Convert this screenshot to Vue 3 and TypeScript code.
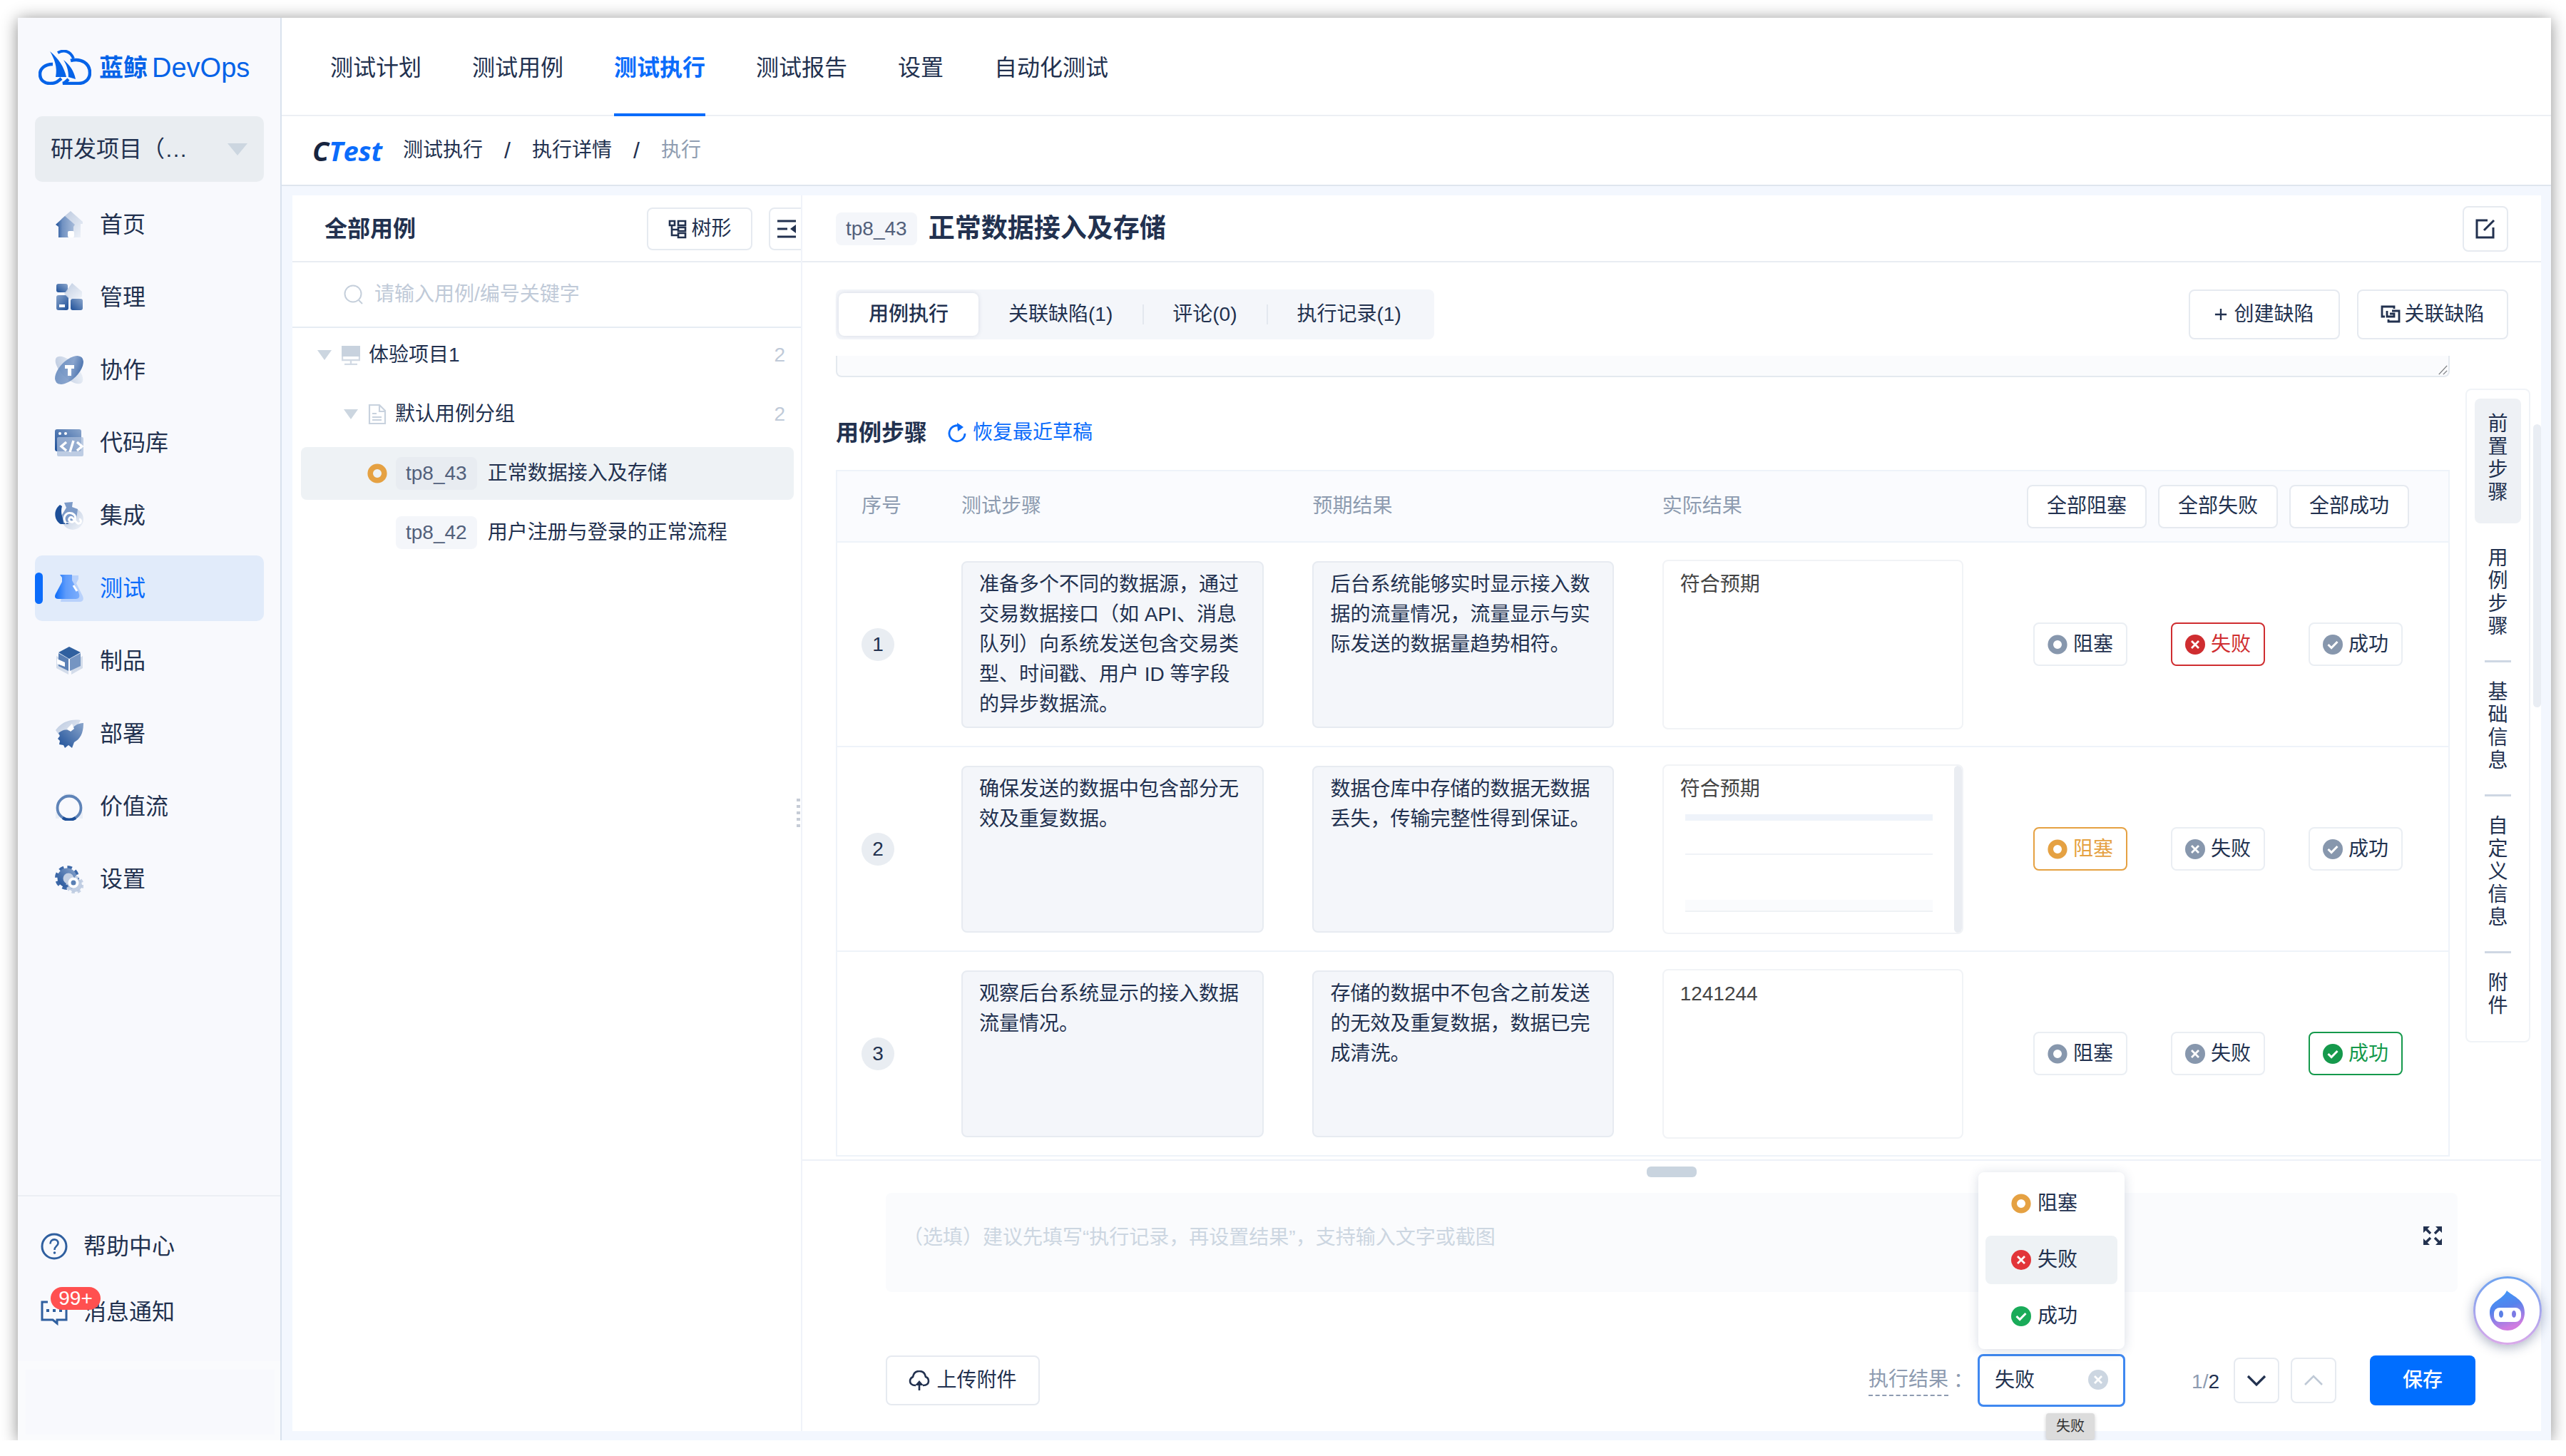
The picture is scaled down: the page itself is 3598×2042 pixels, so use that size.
<script setup lang="ts">
import { ref } from 'vue'

type Status = 'block' | 'fail' | 'pass'

interface Step {
  id: number
  action: string
  expected: string
  actual: string
  hasSketch: boolean
  status: Status
}

const statuses: { key: Status; label: string; icon: string }[] = [
  { key: 'block', label: '阻塞', icon: '#i-block' },
  { key: 'fail', label: '失败', icon: '#i-fail' },
  { key: 'pass', label: '成功', icon: '#i-pass' },
]

const topTabs = ['测试计划', '测试用例', '测试执行', '测试报告', '设置', '自动化测试']
const activeTop = ref('测试执行')

const menu = [
  { label: '首页', icon: '#m-home' },
  { label: '管理', icon: '#m-manage' },
  { label: '协作', icon: '#m-collab' },
  { label: '代码库', icon: '#m-code' },
  { label: '集成', icon: '#m-ci' },
  { label: '测试', icon: '#m-test' },
  { label: '制品', icon: '#m-artifact' },
  { label: '部署', icon: '#m-deploy' },
  { label: '价值流', icon: '#m-value' },
  { label: '设置', icon: '#m-setting' },
]
const activeMenu = ref('测试')

const caseTabs = ['用例执行', '关联缺陷(1)', '评论(0)', '执行记录(1)']
const activeCaseTab = ref('用例执行')

const steps = ref<Step[]>([
  {
    id: 1,
    action: '准备多个不同的数据源，通过交易数据接口（如 API、消息队列）向系统发送包含交易类型、时间戳、用户 ID 等字段的异步数据流。',
    expected: '后台系统能够实时显示接入数据的流量情况，流量显示与实际发送的数据量趋势相符。',
    actual: '符合预期',
    hasSketch: false,
    status: 'fail',
  },
  {
    id: 2,
    action: '确保发送的数据中包含部分无效及重复数据。',
    expected: '数据仓库中存储的数据无数据丢失，传输完整性得到保证。',
    actual: '符合预期',
    hasSketch: true,
    status: 'block',
  },
  {
    id: 3,
    action: '观察后台系统显示的接入数据流量情况。',
    expected: '存储的数据中不包含之前发送的无效及重复数据，数据已完成清洗。',
    actual: '1241244',
    hasSketch: false,
    status: 'pass',
  },
])

const anchors = ['前置步骤', '用例步骤', '基础信息', '自定义信息', '附件']
const activeAnchor = ref('前置步骤')

const keyword = ref('')
const project = ref('研发项目')
const record = ref('')
const precondition = ref('')
const result = ref<Status>('fail')

function markAll(status: Status) {
  steps.value.forEach((s) => (s.status = status))
}
</script>

<template>
  <svg class="sprite" aria-hidden="true">
    <defs>
      <linearGradient id="g-deep" x1="0" y1="1" x2="1" y2="0">
        <stop offset="0" stop-color="#1d4f98" />
        <stop offset="1" stop-color="#8ba6cc" />
      </linearGradient>
      <linearGradient id="g-down" x1="0" y1="0" x2="1" y2="1">
        <stop offset="0" stop-color="#86a2ca" />
        <stop offset="1" stop-color="#1d4f98" />
      </linearGradient>
      <linearGradient id="g-tilt" x1="0" y1="1" x2="1" y2="0">
        <stop offset="0" stop-color="#5f86bb" />
        <stop offset="0.55" stop-color="#7d9bc8" />
        <stop offset="1" stop-color="#1d4f98" />
      </linearGradient>
      <linearGradient id="g-front" x1="0" y1="0" x2="1" y2="0">
        <stop offset="0" stop-color="#1d4f98" />
        <stop offset="0.35" stop-color="#7091c1" />
        <stop offset="1" stop-color="#a9bddb" />
      </linearGradient>
      <linearGradient id="g-pale" x1="0" y1="0" x2="1" y2="1">
        <stop offset="0" stop-color="#b9c7de" />
        <stop offset="1" stop-color="#eff3f9" />
      </linearGradient>
      <linearGradient id="g-blue" x1="0" y1="0" x2="1" y2="0">
        <stop offset="0" stop-color="#0c6cf8" />
        <stop offset="0.45" stop-color="#5e9bfb" />
        <stop offset="1" stop-color="#7badfc" />
      </linearGradient>
      <linearGradient id="g-bot" x1="0" y1="0" x2="0.3" y2="1">
        <stop offset="0" stop-color="#3b9dfb" />
        <stop offset="0.5" stop-color="#5583ec" />
        <stop offset="1" stop-color="#cf7be0" />
      </linearGradient>
      <linearGradient id="g-ring" x1="0" y1="0" x2="0" y2="1">
        <stop offset="0" stop-color="#6ea3f0" />
        <stop offset="1" stop-color="#d9a9ea" />
      </linearGradient>
    </defs>

    <symbol id="i-block" viewBox="0 0 28 28">
      <circle cx="14" cy="14" r="9.8" fill="none" stroke="currentColor" stroke-width="7.6" />
    </symbol>
    <symbol id="i-fail" viewBox="0 0 28 28">
      <circle cx="14" cy="14" r="14" fill="currentColor" />
      <path d="M9 9l10 10M19 9L9 19" stroke="#fff" stroke-width="2.8" fill="none" />
    </symbol>
    <symbol id="i-pass" viewBox="0 0 28 28">
      <circle cx="14" cy="14" r="14" fill="currentColor" />
      <path d="M7.5 14l4.6 4.6L20.5 10" stroke="#fff" stroke-width="3" fill="none" />
    </symbol>

    <symbol id="m-home" viewBox="0 0 40 40">
      <path d="M9 12L22 1l17 15v3h-3v19H19z" fill="url(#g-pale)" />
      <path d="M1 20L14 8l14 12-2 3v7h-7v8H5V23z" fill="url(#g-front)" />
      <rect x="18" y="29" width="9" height="9" rx="2" fill="#fff" />
    </symbol>
    <symbol id="m-manage" viewBox="0 0 40 40">
      <rect x="2" y="1" width="16" height="12" rx="3" fill="url(#g-deep)" />
      <rect x="2" y="17" width="17" height="21" rx="3" fill="url(#g-down)" />
      <rect x="22" y="22" width="17" height="16" rx="3" fill="url(#g-deep)" />
      <path d="M24 0l14 12v7l-4 3H20l-7-7z" fill="url(#g-pale)" opacity="0.9" />
      <rect x="6" y="30" width="8" height="4" fill="#fff" />
    </symbol>
    <symbol id="m-collab" viewBox="0 0 40 40">
      <ellipse cx="20" cy="20" rx="11" ry="25" transform="rotate(-45 20 20)" fill="url(#g-pale)" />
      <ellipse cx="20" cy="20" rx="13" ry="25" transform="rotate(45 20 20)" fill="url(#g-tilt)" opacity="0.9" />
      <rect x="14" y="13" width="13" height="5" fill="#fff" />
      <rect x="18" y="13" width="5" height="15" fill="#fff" />
    </symbol>
    <symbol id="m-code" viewBox="0 0 40 40">
      <rect x="0" y="1" width="37" height="31" rx="3" fill="url(#g-deep)" />
      <rect x="3" y="12" width="37" height="27" rx="2" fill="#a9bcd9" opacity="0.75" />
      <circle cx="7" cy="7" r="2" fill="#fff" />
      <circle cx="15" cy="7" r="2" fill="#fff" />
      <path d="M16 19l-7 6 7 6M31 19l7 6-7 6M26 17l-5 16" fill="none" stroke="#fff" stroke-width="3.4" />
    </symbol>
    <symbol id="m-ci" viewBox="0 0 40 40">
      <circle cx="25" cy="25" r="15" fill="url(#g-pale)" />
      <path d="M7 5C-3 13-1 27 8 32l12 0C11 28 7 17 10 7z" fill="#1d4f98" />
      <path d="M13 2l12-1-1 7 8 3-2 14-18 6-2-12 6-10z" fill="#7d9bc8" />
      <path d="M16 31c-7-8 0-17 8-14 7 3 5 10 1 12-4 1-7-3-4-6 4-3 7 6 11 8 5 1 6-5 2-6" fill="none" stroke="#fff" stroke-width="3" />
    </symbol>
    <symbol id="m-test" viewBox="0 0 40 40">
      <path d="M15 2h18v5l-3 6 9 18c2 5 0 8-4 8H8z" fill="#b8d1fb" />
      <path d="M7 1h17v8l8 14c4 8 3 12-4 12H5c-6 0-6-4-3-9L10 11V5z" fill="url(#g-blue)" />
      <path d="M26 16l5 8" stroke="#fff" stroke-width="3" fill="none" />
    </symbol>
    <symbol id="m-artifact" viewBox="0 0 40 40">
      <path d="M2 13l17 9v17L2 30zM39 13L23 22v17l16-9z" fill="#d3dcea" />
      <path d="M20 0l16 8-16 9L5 8z" fill="#30609f" />
      <path d="M5 9l14 8v17L5 27z" fill="#5a80b5" />
      <path d="M36 9l-15 8v17l15-7z" fill="#7595c2" />
      <path d="M3 17l11 5v6L3 24z" fill="#fff" />
    </symbol>
    <symbol id="m-deploy" viewBox="0 0 40 40">
      <path d="M1 15C9 4 21-1 36 1L25 21 9 27z" fill="url(#g-pale)" />
      <path d="M40 5c0 14-4 22-13 27l-3 8-5-4-5 4-2-4-6-1 1-5-3-3 3-4-2-4c5-4 11-6 15-3l8-7c4-3 8-4 12-4z" fill="url(#g-deep)" />
      <path d="M24 6l3 7-5 4-5-4z" fill="#fff" />
    </symbol>
    <symbol id="m-value" viewBox="0 0 40 40">
      <path d="M13 2h14v4H13zM1 28h5v9H1zM34 28h5v9h-5z" fill="#e9eef6" />
      <circle cx="20" cy="22" r="16.5" fill="none" stroke="#5f84b8" stroke-width="3.8" />
      <path d="M11 36a16.500 16.500 0 0 0 18 0" fill="none" stroke="#1d4f98" stroke-width="4.400" />
    </symbol>
    <symbol id="m-setting" viewBox="0 0 40 40">
      <circle cx="17" cy="18" r="14.500" fill="none" stroke="#3c68a8" stroke-width="5" stroke-dasharray="6.400 4.988" />
      <circle cx="17" cy="18" r="13.500" fill="url(#g-deep)" />
      <circle cx="19" cy="19" r="7.500" fill="#c3d0e4" />
      <circle cx="28" cy="28" r="10.500" fill="none" stroke="#c6d2e5" stroke-width="4" stroke-dasharray="4.400 3.847" />
      <circle cx="28" cy="28" r="10" fill="#b9c8df" opacity="0.85" />
      <circle cx="26" cy="25" r="5.500" fill="#5a80b5" stroke="#fff" stroke-width="4" />
    </symbol>
  </svg>

  <div class="window">
    <aside class="sidebar">
      <a class="logo" href="#">
        <svg class="logo-mark" viewBox="0 0 74 49" aria-hidden="true">
          <path d="M20 20C8 20 2 27 2 34c0 9 7 13 14 13 8 0 10-2 16-7" fill="none" stroke="#0563e8" stroke-width="4.500" />
          <path d="M27 4c9-5 18-2 22 8" fill="none" stroke="#0563e8" stroke-width="4" />
          <path d="M45 15c15-4 27 4 27 17 0 10-8 15-16 15H34c4-1 5-3 8-6" fill="none" stroke="#0563e8" stroke-width="4.500" />
          <path d="M16 2c12 10 20 22 23 36H24C27 24 22 12 16 2z" fill="#0563e8" />
          <path d="M35 14c9 7 15 16 17 27l-10-3c0-9-2-16-7-24z" fill="#0563e8" />
        </svg>
        <span class="logo-cn">蓝鲸</span><span class="logo-en">DevOps</span>
      </a>

      <button class="project" type="button" :aria-label="project">
        <span>研发项目（…</span>
        <i class="caret"></i>
      </button>

      <nav class="menu">
        <a v-for="m in menu" :key="m.label" href="#" class="menu-item" :class="{ active: activeMenu === m.label }" @click.prevent="activeMenu = m.label">
          <svg class="menu-icon" aria-hidden="true"><use :href="m.icon" /></svg>
          <span>{{ m.label }}</span>
        </a>
      </nav>

      <div class="assist">
        <a href="#" class="assist-item">
          <svg viewBox="0 0 38 38" class="assist-icon" aria-hidden="true">
            <circle cx="19" cy="19" r="17" fill="none" stroke="#2f5f9f" stroke-width="3" />
            <path d="M13.500 15.500c0-8 11-8 11-1 0 4-5 4-5 9.500" fill="none" stroke="#2f5f9f" stroke-width="2.600" />
            <circle cx="19.500" cy="28" r="1.800" fill="#2f5f9f" />
          </svg>
          <span>帮助中心</span>
        </a>
        <a href="#" class="assist-item">
          <svg viewBox="0 0 38 38" class="assist-icon" aria-hidden="true">
            <path d="M10 5H2v25h15l6 5v-5h13V5h-8" fill="none" stroke="#2f5f9f" stroke-width="3" />
            <path d="M8 17h4M17 17h4M26 17h4" stroke="#2f5f9f" stroke-width="4" />
          </svg>
          <span>消息通知</span>
          <b class="badge">99+</b>
        </a>
      </div>
      <div class="account"></div>
    </aside>

    <div class="page">
      <nav class="topnav">
        <a v-for="t in topTabs" :key="t" href="#" :class="{ active: activeTop === t }" @click.prevent="activeTop = t">{{ t }}</a>
      </nav>
      <nav class="crumbs" aria-label="breadcrumb">
        <span class="brand"><span class="brand-c">C</span>Test</span>
        <a href="#">测试执行</a><i>/</i><a href="#">执行详情</a><i>/</i><span class="here">执行</span>
      </nav>

      <main class="main">
        <section class="cases">
          <header class="cases-head">
            <h2>全部用例</h2>
            <button type="button" class="btn tree-btn">
              <svg viewBox="0 0 28 28" aria-hidden="true">
                <path d="M3 3h7v6H3zM6 9v14h8M6 15h8M15 3h10v6H15zM15 12h10v5H15zM15 20h10v6H15z" fill="none" stroke="currentColor" stroke-width="2.600" />
              </svg>
              树形
            </button>
            <button type="button" class="btn fold-btn" aria-label="收起">
              <svg viewBox="0 0 28 28" aria-hidden="true">
                <path d="M1 3h26M1 14h14M1 25h26" stroke="currentColor" stroke-width="3" />
                <path d="M27 8v12l-8-6z" fill="currentColor" />
              </svg>
            </button>
          </header>
          <label class="search">
            <svg viewBox="0 0 28 28" aria-hidden="true">
              <circle cx="13" cy="13" r="11.500" fill="none" stroke="currentColor" stroke-width="2" />
              <path d="M21 22l5 5" stroke="currentColor" stroke-width="2" />
            </svg>
            <input v-model="keyword" type="text" placeholder="请输入用例/编号关键字" />
          </label>
          <ul class="tree">
            <li class="row lv1">
              <i class="caret small"></i>
              <svg class="node-icon" viewBox="0 0 26 28" aria-hidden="true">
                <rect x="0" y="1" width="26" height="15" fill="#c8d2de" />
                <path d="M1 16v5h24v-5M13 21v5M4 27h18" fill="none" stroke="#d2dae4" stroke-width="2.400" />
              </svg>
              <span class="name">体验项目1</span><span class="count">2</span>
            </li>
            <li class="row lv2">
              <i class="caret small"></i>
              <svg class="node-icon" viewBox="0 0 26 28" aria-hidden="true">
                <path d="M2 1h14l8 8v18H2zM6 13h6M6 18h13M6 22h13M16 2v8h7" fill="none" stroke="#c8d2de" stroke-width="2.200" />
              </svg>
              <span class="name">默认用例分组</span><span class="count">2</span>
            </li>
            <li class="row lv3 selected">
              <svg class="st-icon block" aria-hidden="true"><use href="#i-block" /></svg>
              <span class="tag">tp8_43</span><span class="name">正常数据接入及存储</span>
            </li>
            <li class="row lv3">
              <i class="st-icon"></i>
              <span class="tag">tp8_42</span><span class="name">用户注册与登录的正常流程</span>
            </li>
          </ul>
          <div class="splitter"><i v-for="n in 5" :key="n"></i></div>
        </section>

        <section class="detail">
          <header class="detail-head">
            <span class="tag">tp8_43</span>
            <h1>正常数据接入及存储</h1>
            <button type="button" class="btn square" aria-label="编辑">
              <svg viewBox="0 0 28 28" aria-hidden="true">
                <path d="M17 2H2v24h23V12M26 2L12 16" fill="none" stroke="currentColor" stroke-width="3" />
              </svg>
            </button>
          </header>

          <div class="toolbar">
            <div class="segments">
              <button v-for="t in caseTabs" :key="t" type="button" :class="{ active: activeCaseTab === t }" @click="activeCaseTab = t">{{ t }}</button>
            </div>
            <div class="actions">
              <button type="button" class="btn wide">
                <svg class="plus" viewBox="0 0 20 20" aria-hidden="true"><path d="M10 1v18M1 10h18" stroke="currentColor" stroke-width="2.600" /></svg>
                创建缺陷
              </button>
              <button type="button" class="btn wide link">
                <svg viewBox="0 0 28 28" aria-hidden="true">
                  <path d="M6 17H2V3h17v3M9 9v8h10v-4h-6M16 9h10v15H11v-3" fill="none" stroke="currentColor" stroke-width="2.800" />
                </svg>
                关联缺陷
              </button>
            </div>
          </div>

          <div class="scroller">
            <div class="content">
              <div class="pre-box">
                <textarea v-model="precondition" class="pre" aria-label="前置步骤" rows="1"></textarea>
                <svg viewBox="0 0 16 16" aria-hidden="true"><path d="M2 15L15 1M9 15l6-6" stroke="#7d7f83" stroke-width="1.600" /></svg>
              </div>
              <div class="steps-title">
                <h3>用例步骤</h3>
                <button type="button" class="restore">
                  <svg viewBox="0 0 28 28" aria-hidden="true">
                    <path d="M19 5A11 11 0 1 0 25 15" fill="none" stroke="currentColor" stroke-width="2.800" />
                    <path d="M14 0l9 6-8 6" fill="currentColor" />
                  </svg>
                  恢复最近草稿
                </button>
              </div>

              <table class="steps">
                <colgroup>
                  <col class="c-no" /><col class="c-a" /><col class="c-b" /><col class="c-b" /><col />
                </colgroup>
                <thead>
                  <tr>
                    <th>序号</th>
                    <th>测试步骤</th>
                    <th>预期结果</th>
                    <th>实际结果</th>
                    <th class="ops">
                      <div class="bulk">
                        <button v-for="s in statuses" :key="s.key" type="button" class="btn" @click="markAll(s.key)">全部{{ s.label }}</button>
                      </div>
                    </th>
                  </tr>
                </thead>
                <tbody>
                  <tr v-for="s in steps" :key="s.id">
                    <td><span class="no">{{ s.id }}</span></td>
                    <td><textarea class="box" readonly :value="s.action" aria-label="测试步骤"></textarea></td>
                    <td><textarea class="box" readonly :value="s.expected" aria-label="预期结果"></textarea></td>
                    <td>
                      <div class="actual" role="textbox" aria-label="实际结果">
                        <div class="actual-body">
                          <p>{{ s.actual }}</p>
                          <div v-if="s.hasSketch" class="sketch"><i class="band"></i><i class="rule"></i><i class="foot"></i></div>
                        </div>
                        <i v-if="s.hasSketch" class="actual-bar"></i>
                      </div>
                    </td>
                    <td class="ops">
                      <div class="marks">
                        <button v-for="k in statuses" :key="k.key" type="button" class="btn mark" :class="{ [k.key]: s.status === k.key }" @click="s.status = k.key">
                          <svg aria-hidden="true"><use :href="k.icon" /></svg>{{ k.label }}
                        </button>
                      </div>
                    </td>
                  </tr>
                </tbody>
              </table>
            </div>

            <nav class="anchors">
              <a v-for="a in anchors" :key="a" href="#" :class="{ active: activeAnchor === a }" @click.prevent="activeAnchor = a"><span>{{ a }}</span></a>
            </nav>
            <div class="thumb"></div>
          </div>

          <footer class="footer">
            <div class="grip"></div>
            <div class="record">
              <input v-model="record" type="text" aria-label="执行记录" placeholder="（选填）建议先填写“执行记录，再设置结果”，支持输入文字或截图" />
              <button type="button" class="expand" aria-label="展开">
                <svg viewBox="0 0 28 28" aria-hidden="true">
                  <path d="M3 3l8 8M25 3l-8 8M3 25l8-8M25 25l-8-8" stroke="currentColor" stroke-width="3.400" />
                  <path d="M1 1h9L1 10zM27 1h-9l9 9zM1 27h9l-9-9zM27 27h-9l9-9z" fill="currentColor" />
                </svg>
              </button>
            </div>
            <div class="submit">
              <button type="button" class="btn upload">
                <svg viewBox="0 0 30 28" aria-hidden="true">
                  <path d="M10 21C4 21 2 18 2 15c0-3 2-5 4-6 1-5 4-8 9-8s8 3 9 8c3 1 4 3 4 6 0 4-3 6-8 6" fill="none" stroke="currentColor" stroke-width="2.600" />
                  <path d="M15 28V18" stroke="currentColor" stroke-width="2.600" />
                  <path d="M9 21l6-7 6 7z" fill="currentColor" />
                </svg>
                上传附件
              </button>
              <label class="result-label" for="result"><span>执行结果</span><i>：</i></label>
              <div class="result">
                <select id="result" v-model="result">
                  <option v-for="s in statuses" :key="s.key" :value="s.key">{{ s.label }}</option>
                </select>
                <svg class="clear" aria-hidden="true"><use href="#i-fail" /></svg>
                <ul class="options" role="listbox">
                  <li v-for="s in statuses" :key="s.key" role="option" :aria-selected="result === s.key" :class="[s.key, { chosen: result === s.key }]" @click="result = s.key">
                    <svg aria-hidden="true"><use :href="s.icon" /></svg><span>{{ s.label }}</span>
                  </li>
                </ul>
                <div class="tip" role="tooltip">失败</div>
              </div>
              <span class="pager">1/<b>2</b></span>
              <button type="button" class="btn square" aria-label="下一条">
                <svg viewBox="0 0 28 28" aria-hidden="true"><path d="M2 8l12 12L26 8" fill="none" stroke="currentColor" stroke-width="3.200" /></svg>
              </button>
              <button type="button" class="btn square" aria-label="上一条" disabled>
                <svg viewBox="0 0 28 28" aria-hidden="true"><path d="M2 20L14 8l12 12" fill="none" stroke="currentColor" stroke-width="2.600" /></svg>
              </button>
              <button type="button" class="save">保存</button>
            </div>
          </footer>
        </section>
      </main>
    </div>

    <button type="button" class="bot" aria-label="智能助手">
      <svg viewBox="0 0 96 96" aria-hidden="true">
        <circle cx="48" cy="48" r="46.500" fill="#fff" stroke="url(#g-ring)" stroke-width="3" />
        <path d="M47 20c8 8 25 12 25 31 0 14-11 25-24 25S23 65 23 51c0-17 18-17 24-31z" fill="url(#g-bot)" />
        <rect x="29" y="44" width="38" height="20" rx="8" fill="#fff" />
        <ellipse cx="39" cy="53" rx="3" ry="5" fill="#5b7fe6" />
        <ellipse cx="57" cy="53" rx="3" ry="5" fill="#7b7ae4" />
      </svg>
    </button>
  </div>
</template>

<style>
body {
  margin: 0;
  background: #fff;
}
</style>

<style scoped>
* {
  box-sizing: border-box;
}
.sprite {
  position: absolute;
  width: 0;
  height: 0;
}
.window,
.page {
  display: flex;
}
.window {
  position: relative;
  margin: 25px 21px 0 25px;
  min-height: calc(100vh - 47px);
  background: #fff;
  box-shadow: 0 2px 22px rgba(0, 0, 0, 0.45);
  font: 28px/42px 'Liberation Sans', 'Noto Sans CJK SC', sans-serif;
  color: #22314f;
}
button,
input,
select,
textarea {
  font: inherit;
  color: inherit;
  margin: 0;
}
button {
  cursor: pointer;
}
a {
  color: inherit;
  text-decoration: none;
}
i {
  font-style: normal;
}
h1,
h2,
h3,
p,
ul {
  margin: 0;
  padding: 0;
}
li {
  list-style: none;
}
.caret {
  width: 0;
  height: 0;
  border: 14px solid transparent;
  border-top: 17px solid #ccd6e0;
  border-bottom: 0;
}
.caret.small {
  border-width: 14px 10px 0;
}
.btn {
  display: flex;
  align-items: center;
  justify-content: center;
  gap: 5px;
  padding: 0;
  border: 2px solid #e6eaf0;
  border-radius: 8px;
  background: #fff;
  white-space: nowrap;
}
.btn svg {
  width: 28px;
  height: 28px;
  flex: none;
}
.btn.square {
  width: 64px;
  height: 64px;
}
.tag {
  padding: 2px 14px;
  border-radius: 8px;
  background: #f4f6fa;
  color: #52607b;
}

/* sidebar */
.sidebar {
  display: flex;
  flex-direction: column;
  flex: none;
  width: 370px;
  background: #f8f9fd;
  border-right: 2px solid #d9e2ee;
  font-size: 32px;
}
.logo {
  display: flex;
  align-items: center;
  height: 138px;
  padding: 1px 0 0 29px;
  color: #0563e8;
}
.logo-mark {
  width: 74px;
  height: 49px;
  margin-right: 11px;
}
.logo-cn {
  font-size: 34px;
  font-weight: 700;
}
.logo-en {
  margin-left: 6px;
  font-size: 38px;
}
.project {
  display: flex;
  align-items: center;
  justify-content: space-between;
  height: 92px;
  margin: 0 23px 0 24px;
  padding: 0 23px 0 22px;
  border: 0;
  border-radius: 10px;
  background: #e9edf1;
}
.menu {
  display: flex;
  flex-direction: column;
  gap: 10px;
  margin: 14px 23px 0 24px;
}
.menu-item {
  display: flex;
  align-items: center;
  gap: 23px;
  height: 92px;
  padding-left: 28px;
  border-radius: 10px;
  position: relative;
}
.menu-item.active {
  background: #e1ebfa;
  color: #0b6cfb;
}
.menu-item.active::before {
  content: '';
  position: absolute;
  left: 0;
  top: 24px;
  width: 11px;
  height: 44px;
  border-radius: 6px;
  background: #0b6cfb;
}
.menu-icon {
  width: 40px;
  height: 40px;
}
.assist {
  margin-top: auto;
  padding: 24px 0 23px 32px;
  border-top: 2px solid #eceff4;
}
.assist-item {
  position: relative;
  display: flex;
  align-items: center;
  gap: 22px;
  height: 92px;
}
.assist-icon {
  width: 38px;
  height: 38px;
}
.badge {
  position: absolute;
  left: 14px;
  top: 11px;
  width: 70px;
  height: 32px;
  border-radius: 16px;
  background: #ff5050;
  color: #fff;
  font-size: 28px;
  font-weight: 400;
  line-height: 32px;
  text-align: center;
}
.account {
  height: 111px;
  border: solid #fafbfd;
  border-width: 12px 8px 8px 11px;
}

/* top bars */
.page {
  flex: 1;
  flex-direction: column;
  min-width: 0;
}
.topnav {
  display: flex;
  gap: 71px;
  height: 138px;
  padding-left: 68px;
  border-bottom: 2px solid #eceff4;
  font-size: 32px;
}
.topnav a {
  height: 138px;
  line-height: 140px;
}
.topnav .active {
  color: #0b6cfb;
  font-weight: 700;
  border-bottom: 4px solid #0b6cfb;
}
.crumbs {
  display: flex;
  align-items: center;
  height: 98px;
  padding-left: 43px;
  border-bottom: 2px solid #dfe5ee;
}
.crumbs i {
  width: 69px;
  text-align: center;
  font-size: 32px;
}
.crumbs .here {
  color: #8f9db1;
}
.brand {
  width: 127px;
  font: italic 700 38px/42px 'Open Sans', sans-serif;
  color: #0b6cfb;
}
.brand-c {
  color: #17243f;
}
.main {
  display: flex;
  flex: 1;
  padding: 13px 14px 13px 15px;
  background: #f3f7fe;
}

/* case tree */
.cases {
  position: relative;
  flex: none;
  width: 715px;
  overflow: hidden;
  background: #fff;
  border-right: 2px solid #f0f3f9;
}
.cases-head {
  display: flex;
  align-items: center;
  height: 94px;
  padding: 2px 0 0 45px;
  border-bottom: 2px solid #e9edf2;
}
.cases-head h2 {
  font-size: 32px;
  font-weight: 700;
}
.cases-head .btn {
  height: 60px;
}
.tree-btn {
  width: 148px;
  margin-left: auto;
}
.fold-btn.btn {
  width: 64px;
  margin: 0 -19px 0 23px;
  padding-left: 9px;
  justify-content: flex-start;
}
.search {
  display: flex;
  align-items: center;
  gap: 15px;
  height: 92px;
  padding-left: 72px;
  border-bottom: 2px solid #e6ecf3;
  color: #c5cfdb;
}
.search svg {
  width: 28px;
  height: 28px;
}
.search input {
  flex: 1;
  padding: 0;
  border: 0;
  outline: 0;
  background: none;
}
::placeholder {
  color: #c0cad8;
  opacity: 1;
}
.tree {
  display: flex;
  flex-direction: column;
  gap: 9px;
  padding: 1px 10px 0 12px;
}
.row {
  display: flex;
  align-items: center;
  height: 74px;
  padding-right: 12px;
  border-radius: 8px;
}
.row.selected {
  background: #eef2f5;
}
.row.selected .tag {
  background: #e8ecf1;
}
.lv1 {
  padding-left: 23px;
}
.lv2 {
  padding-left: 60px;
}
.lv3 {
  padding-left: 93px;
}
.node-icon {
  width: 26px;
  height: 28px;
  margin: 0 12px 0 14px;
}
.st-icon {
  width: 28px;
  height: 28px;
  margin-right: 12px;
}
.block {
  color: #e5a142;
}
.row .tag + .name {
  margin-left: 15px;
}
.count {
  margin-left: auto;
  color: #c0cad8;
}
.splitter {
  position: absolute;
  right: 1px;
  top: 846px;
  display: grid;
  gap: 5px;
}
.splitter i {
  width: 5px;
  height: 4px;
  background: #c6ccd6;
}

/* detail */
.detail {
  display: flex;
  flex-direction: column;
  flex: 1;
  min-width: 0;
  background: #fff;
}
.detail-head {
  display: flex;
  align-items: center;
  gap: 16px;
  height: 94px;
  padding: 2px 46px 0 47px;
  border-bottom: 2px solid #e9edf2;
}
.detail-head h1 {
  font-size: 37px;
  font-weight: 700;
}
.detail-head .btn {
  margin-left: auto;
}
.toolbar {
  display: flex;
  justify-content: space-between;
  padding: 38px 46px 23px 47px;
}
.segments {
  display: flex;
  align-items: center;
  height: 70px;
  padding: 0 4px;
  border-radius: 8px;
  background: #f4f6fa;
}
.segments button {
  position: relative;
  height: 60px;
  padding: 0 42px;
  border: 0;
  border-radius: 8px;
  background: none;
}
.segments .active {
  background: #fff;
  font-weight: 500;
  box-shadow: 0 0 6px rgba(60, 80, 120, 0.16);
}
.segments button:not(.active) + button::before {
  content: '';
  position: absolute;
  left: 0;
  top: 16px;
  width: 2px;
  height: 28px;
  background: #e3e8ef;
}
.actions {
  display: flex;
  gap: 24px;
}
.btn.wide {
  width: 212px;
  height: 70px;
}
.btn .plus {
  width: 18px;
  height: 18px;
  margin-right: 4px;
}
.scroller {
  display: flex;
  align-items: flex-start;
  padding: 0 0 4px 47px;
}
.content {
  flex: 1;
  min-width: 0;
}
.pre-box {
  position: relative;
  height: 30px;
}
.pre {
  display: block;
  width: 100%;
  height: 30px;
  padding: 0 24px;
  border: 2px solid #e4e9ef;
  border-top: 0;
  border-radius: 0 0 8px 8px;
  background: #fafbfd;
  outline: 0;
  resize: none;
  overflow: hidden;
}
.pre-box svg {
  position: absolute;
  right: 3px;
  bottom: 3px;
  width: 14px;
  height: 14px;
}
.steps-title {
  display: flex;
  align-items: center;
  gap: 28px;
  height: 130px;
  padding-top: 26px;
}
.steps-title h3 {
  font-size: 32px;
  font-weight: 700;
}
.restore {
  display: flex;
  align-items: center;
  gap: 8px;
  padding: 0;
  border: 0;
  background: none;
  color: #0b6cfb;
}
.restore svg {
  width: 28px;
  height: 28px;
}
.steps {
  width: 100%;
  table-layout: fixed;
  border-spacing: 0;
  border: solid #eef3f9;
  border-width: 2px 2px 0;
}
.c-no {
  width: 140px;
}
.c-a {
  width: 21.8%;
}
.c-b {
  width: 21.7%;
}
.steps th {
  height: 100px;
  padding: 0 34px;
  background: #fafbfe;
  border-bottom: 2px solid #eef3f9;
  text-align: left;
  font-weight: 400;
  color: #8d9bb0;
}
.steps td {
  height: 287px;
  padding: 23px 34px;
  border-bottom: 2px solid #eef3f9;
  vertical-align: middle;
}
.steps .ops {
  padding: 0;
  color: #22314f;
}
.no {
  display: block;
  width: 46px;
  height: 46px;
  border-radius: 50%;
  background: #e9edf2;
  line-height: 46px;
  text-align: center;
}
.box {
  display: block;
  width: 100%;
  height: 234px;
  padding: 10px 22px 10px 23px;
  border: 2px solid #e7ebf1;
  border-radius: 8px;
  background: #f4f6fa;
  line-height: 42px;
  outline: 0;
  resize: none;
  overflow: hidden;
}
.actual {
  display: flex;
  height: 238px;
  border: 2px solid #f1f3f6;
  border-radius: 8px;
  color: #444;
  overflow: hidden;
}
.actual-body {
  flex: 1;
  padding: 12px 23px;
}
.actual-bar {
  width: 11px;
  border-radius: 6px;
  background: #eaedf2;
}
.sketch {
  display: flex;
  flex-direction: column;
  margin: 14px 7px 0;
}
.sketch .band {
  height: 9px;
  background: #eff3fa;
}
.sketch .rule {
  height: 2px;
  margin: 46px 0 63px;
  background: #eff2f7;
}
.sketch .foot {
  height: 17px;
  background: #fafbfd;
  border-bottom: 2px solid #eff2f5;
}
.bulk,
.marks {
  display: flex;
  justify-content: center;
}
.bulk {
  gap: 16px;
}
.bulk .btn {
  width: 168px;
  height: 61px;
}
.marks {
  gap: 61px;
}
.mark.btn {
  width: 132px;
  height: 61px;
  gap: 8px;
  border-color: #eaeef3;
}
.mark svg {
  color: #8797ad;
}
.mark.block,
.mark.block svg {
  color: #e5a142;
}
.mark.fail,
.mark.fail svg {
  color: #cf2d30;
}
.mark.pass,
.mark.pass svg {
  color: #15994c;
}
.mark.block,
.mark.fail,
.mark.pass {
  border-color: currentColor;
}
.anchors {
  display: flex;
  flex-direction: column;
  gap: 13px;
  flex: none;
  width: 91px;
  margin: 46px 4px 0 22px;
  padding: 12px 11px 9px;
  border: 2px solid #f0f3f7;
  border-radius: 8px;
}
.anchors a {
  position: relative;
  padding: 20px 0 27px;
  border-radius: 8px;
}
.anchors .active {
  background: #eef1f5;
}
.anchors a:not(.active) + a::before {
  content: '';
  position: absolute;
  left: 14px;
  top: -9px;
  width: 37px;
  height: 3px;
  background: #ced7e3;
}
.anchors a:last-child {
  padding-bottom: 24px;
}
.anchors span {
  display: block;
  width: 28px;
  margin: 0 auto;
  line-height: 32px;
  word-break: break-all;
}
.thumb {
  flex: none;
  width: 11px;
  height: 397px;
  margin-top: 96px;
  border-radius: 6px;
  background: #e9edf3;
}

/* footer */
.footer {
  border-top: 2px solid #edf1f8;
  padding-bottom: 33px;
}
.grip {
  width: 70px;
  height: 15px;
  margin: 8px auto 22px;
  border-radius: 6px;
  background: #c9d4df;
}
.record {
  display: flex;
  align-items: center;
  height: 139px;
  margin: 0 117px;
  padding: 0 21px 0 24px;
  border-radius: 8px;
  background: #fafbfd;
}
.record input {
  flex: 1;
  height: 42px;
  margin-bottom: 14px;
  padding: 0;
  border: 0;
  outline: 0;
  background: none;
}
.record input::placeholder {
  color: #ccd6e1;
}
.expand {
  width: 28px;
  height: 28px;
  margin-bottom: 20px;
  padding: 0;
  border: 0;
  background: none;
}
.expand svg {
  display: block;
  width: 28px;
  height: 28px;
}
.submit {
  display: flex;
  align-items: center;
  height: 74px;
  margin: 87px 92px 0 117px;
}
.upload.btn {
  width: 216px;
  height: 70px;
  gap: 9px;
}
.upload.btn svg {
  width: 30px;
}
.result-label {
  display: flex;
  margin-left: auto;
  color: #8d9bb0;
}
.result-label span {
  border-bottom: 2px dashed #8d9bb0;
}
.result-label i {
  width: 28px;
  font-family: 'Noto Sans CJK TC', sans-serif;
}
.result {
  position: relative;
  width: 207px;
  height: 74px;
  margin-left: 13px;
}
.result select {
  width: 100%;
  height: 100%;
  padding: 0 21px;
  border: 3px solid #3f88f0;
  border-radius: 8px;
  background: #fff;
  appearance: none;
  outline: 0;
}
.clear {
  position: absolute;
  right: 24px;
  top: 22px;
  width: 28px;
  height: 28px;
  color: #ccd6e1;
}
.options {
  position: absolute;
  left: 1px;
  bottom: 81px;
  display: grid;
  gap: 11px;
  width: 205px;
  padding: 10px 10px 12px;
  border-radius: 8px;
  background: #fff;
  box-shadow: 0 2px 16px rgba(40, 60, 110, 0.18);
}
.options li {
  display: flex;
  align-items: center;
  gap: 9px;
  height: 68px;
  padding-left: 36px;
  border-radius: 8px;
}
.options .chosen {
  background: #eef2f5;
}
.options svg {
  width: 28px;
  height: 28px;
}
.options .fail svg {
  color: #e23539;
}
.options .pass svg {
  color: #1aab59;
}
.options span {
  color: #22314f;
}
.tip {
  position: absolute;
  left: 96px;
  top: 83px;
  width: 68px;
  height: 37px;
  border-radius: 4px;
  background: #dcdcdc;
  box-shadow: 0 2px 5px rgba(0, 0, 0, 0.2);
  color: #333;
  font-size: 20px;
  line-height: 37px;
  text-align: center;
}
.pager {
  margin: 4px 20px 0 93px;
  color: #8d9bb0;
}
.pager b {
  font-weight: 400;
  color: #22314f;
}
.submit .square {
  margin-right: 16px;
}
.submit .square:disabled {
  margin-right: 47px;
  color: #bfc9d6;
}
.save {
  width: 148px;
  height: 70px;
  border: 0;
  border-radius: 8px;
  background: #006eff;
  color: #fff;
  font-weight: 500;
}
.bot {
  position: absolute;
  right: 13px;
  bottom: 134px;
  width: 96px;
  height: 96px;
  padding: 0;
  border: 0;
  border-radius: 50%;
  background: none;
  box-shadow: 0 4px 16px rgba(20, 40, 90, 0.35);
}
.bot svg {
  display: block;
}
</style>
